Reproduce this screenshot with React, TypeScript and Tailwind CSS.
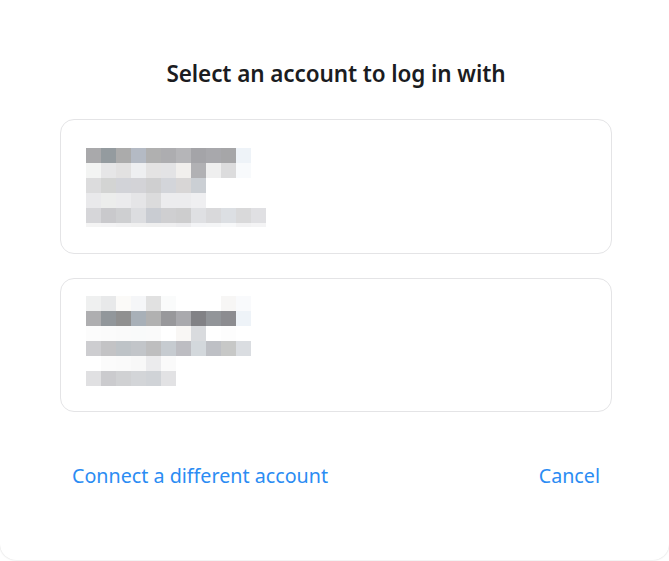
import React from "react";

const card1: string[][] = [
  ["#a9a9ab","#949b9f","#ababab","#b4bac4","#b0b0b0","#adadb0","#b5b5b8","#a4a4a8","#a8a8ac","#a6a6a8","#eef3f8"],
  ["#f3f4f3","#e6e6e7","#e2e1e1","#eeeff1","#e4e3e3","#e3e3e5","#f1efed","#b1b1b4","#efefef","#dcdcdd","#f8fafc"],
  ["#dcdcdd","#d3d4d3","#d2d3d8","#d3d3d7","#cfcfd0","#d3d5da","#d8d6d6","#cbcfd4"],
  ["#e9e9eb","#ecedec","#ebebed","#e5e5e7","#dbdbdc","#ececee","#ececee","#efeff1"],
  ["#d6d6d9","#c9c9cc","#cecfd1","#dcdde0","#c9ccd2","#cfcfd1","#cdcdce","#dfe0e3","#d9d9db","#dcdfe3","#d9d9da","#e0e0e3"],
];

const card2: string[][] = [
  ["#eff0f0","#e8e9ea","#fbfaf8","#f5f6f8","#e1e1e1","#fafbfb","#ffffff","#ffffff","#ffffff","#f7f6f5","#f9fafc"],
  ["#aeaeb0","#92979b","#909090","#a8b0b8","#b1b1b1","#98989b","#a9a9ad","#828286","#929599","#8c8c90","#eef3f8"],
  ["#fcfcfc","#fbfbfb","#fafafa","#f9fafa","#fafafa","#ffffff","#f9f7f5","#d9dbde","#ffffff","#fdfdfd","#ffffff"],
  ["#cdcdd0","#c3c3c5","#bec3c7","#c2c5c9","#bebebf","#c6cbd0","#bdbdc2","#d3d8dc","#bec0c5","#c7c8c7","#dadde1"],
  ["#ffffff","#fbfbfb","#fafafa","#f8f8f8","#ebebed","#fafafa"],
  ["#e0e0e2","#cbcbce","#d0d1d3","#d3d5d8","#d0d3d7","#e2e2e4"],
];

function Mosaic({ rows, tail }: { rows: string[][]; tail?: string[] }) {
  return (
    <div className="flex flex-col">
      {rows.map((r, i) => (
        <div key={i} className="flex h-[15px]">
          {r.map((c, j) => (
            <div key={j} className="w-[15px] h-[15px]" style={{ backgroundColor: c }} />
          ))}
        </div>
      ))}
      {tail && (
        <div className="flex h-[4px]">
          {tail.map((c, j) => (
            <div key={j} className="w-[15px] h-[4px]" style={{ backgroundColor: c }} />
          ))}
        </div>
      )}
    </div>
  );
}

export default function App() {
  return (
    <div className="w-[669px] h-[561px] bg-white" style={{ fontFamily: '"Noto Sans", "Open Sans", sans-serif' }}>
      <div className="h-[560px] bg-white rounded-b-[16px] shadow-[0_0_2px_rgba(0,0,0,0.18)] flex flex-col pl-[60px] pr-[57px] pt-[57px]">
        <h1 className="text-center text-[22.5px] leading-[34px] font-semibold text-[#1b1c21] tracking-[-0.1px]">
          Select an account to log in with
        </h1>
        <div className="mt-[28px] h-[135px] rounded-[14px] border border-[#e4e4e6] pl-[25px] pt-[28px]">
          <Mosaic
            rows={card1}
            tail={["#f4f4f4","#f3f3f4","#f1f1f2","#f0f0f0","#efefef","#efeff0","#ececee","#f3f4f6","#f4f5f6","#f7f8f9","#f2f2f3","#f4f4f5"]}
          />
        </div>
        <div className="mt-[24px] h-[134px] rounded-[14px] border border-[#e4e4e6] pl-[25px] pt-[17px]">
          <Mosaic rows={card2} />
        </div>
        <div className="mt-[50px] flex justify-between px-[12px] text-[19.7px] leading-[28px] text-[#2b8cf3]">
          <span>Connect a different account</span>
          <span>Cancel</span>
        </div>
      </div>
    </div>
  );
}
